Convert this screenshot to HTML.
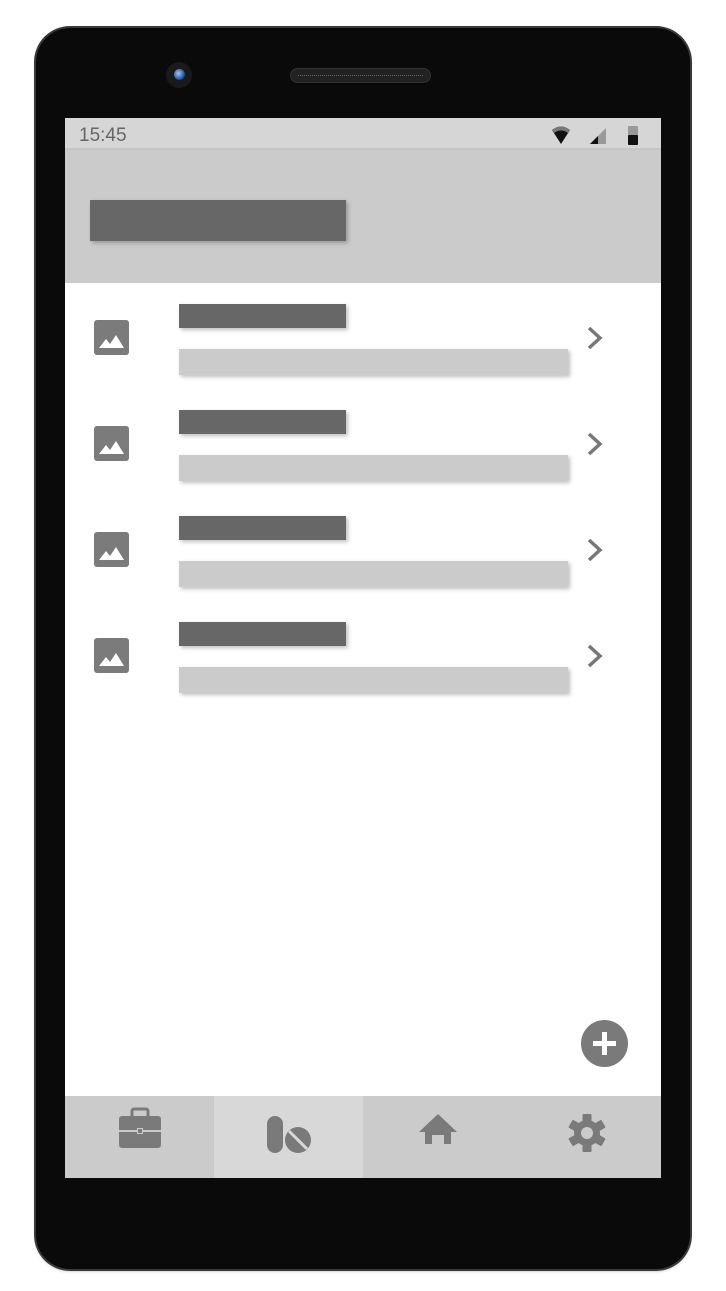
<!DOCTYPE html>
<html><head><style>
*{margin:0;padding:0;box-sizing:border-box}
body{width:726px;height:1291px;background:#fff;position:relative;overflow:hidden;font-family:"Liberation Sans",sans-serif}
.a{position:absolute}
.phone{left:36px;top:28px;width:654px;height:1241px;background:#0a0a0a;border-radius:34px;box-shadow:0 0 0 2px #3a3a3a,0 2px 3px rgba(0,0,0,.3)}
.t{background:#676767;box-shadow:2px 2px 4px rgba(0,0,0,.25)}
.s{background:#cbcbcb;box-shadow:2px 2px 4px rgba(0,0,0,.25)}
</style></head><body>
<div class="a phone"></div>
<div class="a" style="left:166px;top:62px;width:26px;height:26px;border-radius:50%;background:#1a1a1a"></div>
<div class="a" style="left:174px;top:69px;width:11px;height:11px;border-radius:50%;background:radial-gradient(circle at 40% 40%,#9cc8ff,#2a5a9a 60%,#111)"></div>
<div class="a" style="left:290px;top:68px;width:141px;height:15px;border-radius:8px;background:#222;border:1px solid #333"></div>
<div class="a" style="left:298px;top:75px;width:125px;height:1px;border-top:1px dotted #666"></div>
<div class="a" style="left:65px;top:118px;width:596px;height:1060px;background:#fff"></div>
<div class="a" style="left:65px;top:118px;width:596px;height:32px;background:#d6d6d6;border-bottom:2px solid #c6c6c6"></div>
<div class="a" style="left:79px;top:125px;font-size:19px;color:#666">15:45</div>
<svg class="a" style="left:548px;top:124px" width="100" height="22"><path d="M4 6 Q13 -1 22 6 L13 20Z" fill="#111"/><path d="M4 6 Q13 -1 22 6 L20 9 Q13 4 6 9Z" fill="#777"/><path d="M42 20 L58 20 L58 4Z" fill="#999"/><path d="M42 20 L50 20 L50 12Z" fill="#111"/><rect x="80" y="2" width="10" height="19" rx="1" fill="#999"/><rect x="80" y="11" width="10" height="10" rx="1" fill="#111"/></svg>
<div class="a" style="left:65px;top:150px;width:596px;height:133px;background:#cbcbcb"></div>
<div class="a t" style="left:90px;top:200px;width:256px;height:41px"></div>

<div id="rows"></div>
<script>
var h='';for(var i=0;i<4;i++){var y=i*106;
h+='<div class="a" style="left:94px;top:'+(320+y)+'px;width:35px;height:35px;background:#7b7b7b;border-radius:3px"></div>';
h+='<svg class="a" style="left:94px;top:'+(320+y)+'px" width="35" height="35"><path d="M5 28 L12 19 L16 24 L22 15 L30 28Z" fill="#fff"/></svg>';
h+='<div class="a t" style="left:179px;top:'+(304+y)+'px;width:167px;height:24px"></div>';
h+='<div class="a s" style="left:179px;top:'+(349+y)+'px;width:389px;height:26px"></div>';
h+='<svg class="a" style="left:585px;top:'+(325+y)+'px" width="22" height="26"><path d="M4 3 L15 13 L4 23" stroke="#777" stroke-width="3.5" fill="none"/></svg>';}
document.getElementById('rows').innerHTML=h;
</script>

<div class="a" style="left:581px;top:1020px;width:47px;height:47px;border-radius:50%;background:#7a7a7a"></div>
<div class="a" style="left:593px;top:1041px;width:23px;height:5px;background:#fff"></div>
<div class="a" style="left:602px;top:1032px;width:5px;height:23px;background:#fff"></div>

<div class="a" style="left:65px;top:1096px;width:596px;height:82px;background:#cbcbcb"></div>
<div class="a" style="left:214px;top:1096px;width:149px;height:82px;background:#d8d8d8"></div>
<svg class="a" style="left:65px;top:1096px" width="596" height="82">
<g fill="#7a7a7a">
<rect x="54" y="20" width="42" height="32" rx="3"/>
<rect x="67" y="13" width="16" height="9" rx="2" fill="none" stroke="#7a7a7a" stroke-width="3"/>
<rect x="54" y="34" width="42" height="2" fill="#cbcbcb"/>
<rect x="72" y="32" width="6" height="6" fill="#cbcbcb"/>
<rect x="73" y="33" width="4" height="4"/>
<rect x="202" y="20" width="16" height="37" rx="8"/>
<circle cx="233" cy="44" r="13"/>
<path d="M224 35 L242 53" stroke="#d8d8d8" stroke-width="3"/>
<path d="M373 18 L392 36 L386 36 L386 48 L379 48 L379 39 L367 39 L367 48 L360 48 L360 36 L354 36Z"/>
<g transform="translate(522,37)"><circle r="13"/><g id="th"><rect x="-4.5" y="-19" width="9" height="8" rx="1"/></g><use href="#th" transform="rotate(60)"/><use href="#th" transform="rotate(120)"/><use href="#th" transform="rotate(180)"/><use href="#th" transform="rotate(240)"/><use href="#th" transform="rotate(300)"/><circle r="6" fill="#cbcbcb"/></g>
</g></svg>
</body></html>
